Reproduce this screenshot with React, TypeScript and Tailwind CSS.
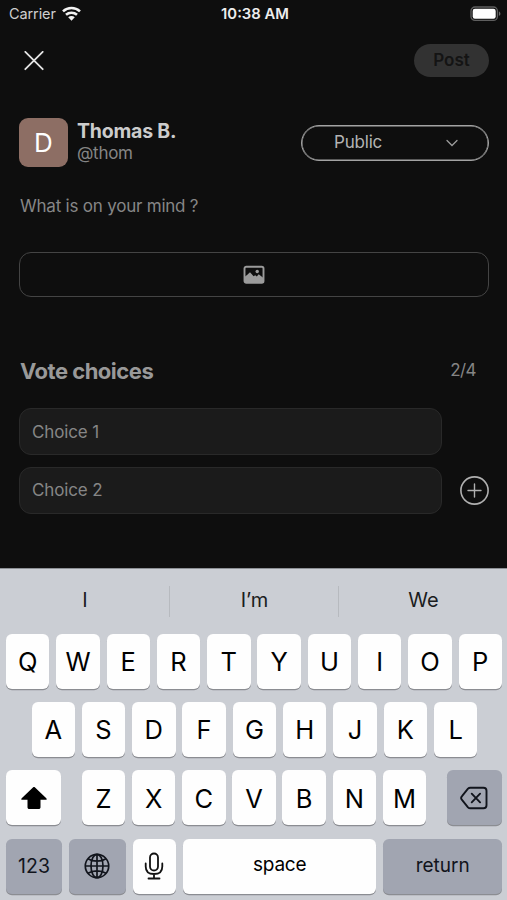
import { useState } from "react";
import type { ReactNode } from "react";
import clsx from "clsx";

const firstRow = ["Q", "W", "E", "R", "T", "Y", "U", "I", "O", "P"];
const secondRow = ["A", "S", "D", "F", "G", "H", "J", "K", "L"];
const thirdRow = ["Z", "X", "C", "V", "B", "N", "M"];
const suggestions = ["I", "I’m", "We"];

type KeyProps = {
  children: ReactNode;
  className?: string;
  dark?: boolean;
  label?: string;
};

function Key({ children, className, dark, label }: KeyProps) {
  return (
    <button
      type="button"
      aria-label={label}
      className={clsx(
        "flex h-[55px] shrink-0 items-center justify-center rounded-[6px] shadow-[0_1.3px_0_#8b8d92]",
        dark ? "bg-[#a1a5b1] text-[#11141c]" : "bg-[#fefefe] text-black",
        className
      )}
    >
      {children}
    </button>
  );
}

function LetterKey({ letter }: { letter: string }) {
  return (
    <Key className="w-[43.4px] pt-px text-[25.5px] leading-none">
      {letter}
    </Key>
  );
}

function StatusBar() {
  return (
    <div className="grid h-7 grid-cols-3 items-center pr-[6px] pl-[9px] text-[#ededed]">
      <div className="flex items-center gap-[6px]">
        <span className="text-[14.5px] leading-none tracking-[-0.1px] text-[#cfcfcf]">Carrier</span>
        <svg className="-mt-[2px]" width="19" height="15" viewBox="0 0 19 15" fill="none" stroke="#f2f2f2" strokeWidth="2.6">
          <path d="M1 5.4C5.8.9 13.2.9 18 5.400" />
          <path d="M4 8.800c3.100-2.800 7.900-2.800 11 0" />
          <path d="M6.200 11.200c1.900-1.700 4.700-1.700 6.600 0L9.500 14.700z" fill="#f2f2f2" stroke="none" />
        </svg>
      </div>
      <span className="text-center text-[14.8px] leading-none font-semibold whitespace-nowrap">10:38 AM</span>
      <svg className="justify-self-end" width="31" height="16" viewBox="0 0 31 16">
        <rect x="1" y="1" width="26.4" height="13.4" rx="4" fill="#0e0e0e" stroke="#5f5f5f" strokeWidth="1.3" />
        <rect x="2.700" y="2.700" width="23" height="10" rx="2.2" fill="#fff" />
        <path d="M28.9 5.500c2 .7 2 3.700 0 4.500z" fill="#6b6b6b" />
      </svg>
    </div>
  );
}

function Keyboard() {
  return (
    <div className="h-[332px] border-t border-[#8d9095] bg-[#cbced4] text-[#1a1c20]">
      <div className="grid h-[64.5px] grid-cols-3 items-center">
        {suggestions.map((word, i) => (
          <div
            key={word}
            className={clsx(
              "flex h-[31px] items-center justify-center pb-[2px] pl-px text-[20px] leading-none",
              i > 0 && "border-l border-[#b7babf]"
            )}
          >
            {word}
          </div>
        ))}
      </div>

      <div className="flex flex-col gap-[13.4px] pr-[5px] pl-[6px]">
        <div className="flex justify-between">
          {firstRow.map((l) => (
            <LetterKey key={l} letter={l} />
          ))}
        </div>
        <div className="flex justify-between pr-[24.5px] pl-[25.5px]">
          {secondRow.map((l) => (
            <LetterKey key={l} letter={l} />
          ))}
        </div>
        <div className="flex justify-between">
          <Key label="shift" className="w-[55px]">
            <svg width="28" height="24" viewBox="0 0 28 24">
              <path
                d="M13.200 1.300 1.700 12.300c-.9 1-.3 1.500.5 1.500h5.300v7.400c0 1.200.7 1.800 1.800 1.800h9.400c1.100 0 1.800-.6 1.800-1.800v-7.400h5.300c.8 0 1.400-.5.5-1.500L14.800 1.300c-.5-.5-1.100-.5-1.600 0z"
                fill="#000"
              />
            </svg>
          </Key>
          <div className="flex gap-[6.8px]">
            {thirdRow.map((l) => (
              <LetterKey key={l} letter={l} />
            ))}
          </div>
          <Key dark label="delete" className="w-[55px]">
            <svg width="28" height="24" viewBox="0 0 28 24" fill="none" stroke="#11141c" strokeWidth="1.9" strokeLinejoin="round" strokeLinecap="round">
              <path d="M10.300 1.700h13.200c2 0 3 1 3 3v14.600c0 2-1 3-3 3H10.300c-1 0-1.700-.3-2.300-.9l-6-7.500c-1.200-1.300-1.200-2.500 0-3.800l6-7.500c.6-.6 1.300-.9 2.300-.9z" />
              <path d="m11.700 7.700 8.400 8.600m0-8.600-8.400 8.600" />
            </svg>
          </Key>
        </div>
        <div className="flex justify-between">
          <Key dark className="w-[56px] text-[19.5px]">123</Key>
          <Key dark label="globe" className="w-[56.5px]">
            <svg width="26" height="26" viewBox="0 0 26 26" fill="none" stroke="#11141c" strokeWidth="1.7">
              <circle cx="13" cy="13" r="11.700" />
              <ellipse cx="13" cy="13" rx="6" ry="11.700" />
              <path d="M13 1.300v23.400M1.300 13h23.400M4 5.700c5 3.200 13 3.200 18 0M4 20.300c5-3.200 13-3.200 18 0" />
            </svg>
          </Key>
          <Key label="dictate" className="w-[43.4px]">
            <svg width="20" height="28" viewBox="0 0 20 28" fill="none" stroke="#111" strokeWidth="1.8" strokeLinecap="round">
              <rect x="6" y="1.500" width="8" height="17" rx="4" />
              <path d="M1.700 11.500v2.900c0 5 3.300 7.600 8.300 7.600s8.300-2.600 8.300-7.600v-2.900M10 22v4.500M4.500 26.500h11" />
            </svg>
          </Key>
          <Key className="w-[193.5px] pb-[2px] text-[19px] tracking-[-0.2px]">space</Key>
          <Key dark className="w-[118.5px] text-[19px]">return</Key>
        </div>
      </div>
    </div>
  );
}

export default function App() {
  const [choices, setChoices] = useState(["", ""]);

  const updateChoice = (index: number, value: string) => {
    setChoices(choices.map((c, i) => (i === index ? value : c)));
  };

  return (
    <div className="flex h-[900px] w-[507px] flex-col overflow-hidden bg-[#0e0e0e] font-['Inter','Liberation_Sans',sans-serif]">
      <StatusBar />

      <div className="flex h-[540px] flex-col pr-[18px] pl-[19px]">
        <div className="mt-4 flex h-[33px] items-center justify-between">
          <button type="button" aria-label="Close" className="ml-[5px]">
            <svg width="20" height="20" viewBox="0 0 20 20" stroke="#e4e4e4" strokeWidth="1.8" strokeLinecap="round">
              <path d="m1.300.8 17.400 17.400M18.700.8 1.300 18.200" />
            </svg>
          </button>
          <button type="button" className="h-[33px] w-[75px] rounded-full bg-[#323232] text-[17px] font-semibold text-[#141414]">
            Post
          </button>
        </div>

        <div className="mt-[41px] flex h-[49px] items-center">
          <div className="flex size-[49px] items-center justify-center rounded-[9px] bg-[#8d6e64] text-[26px] leading-none text-white">
            D
          </div>
          <div className="-mt-[3px] ml-[9px] flex flex-col">
            <span className="text-[19.5px] leading-[24px] font-bold tracking-[-0.2px] text-[#cccccc]">Thomas B.</span>
            <span className="text-[17px] leading-[21px] tracking-[-0.3px] text-[#858585]">@thom</span>
          </div>
          <button
            type="button"
            className="ml-auto flex h-9 w-[188px] items-center justify-between rounded-full border border-[#a3a3a3] pr-[30px] pl-[32px] text-[17px] tracking-[-0.2px] text-[#b3b3b3] shadow-[inset_0_0_0_0.5px_#a3a3a3]"
          >
            Public
            <svg width="12" height="8" viewBox="0 0 12 8" fill="none" stroke="#9c9c9c" strokeWidth="1.3" strokeLinecap="round">
              <path d="m1 1.500 5 5 5-5" />
            </svg>
          </button>
        </div>

        <p className="mt-[28px] h-[22px] pl-px text-[17px] leading-[22px] tracking-[-0.22px] text-[#868686]">What is on your mind ?</p>

        <button
          type="button"
          aria-label="Add image"
          className="mt-[35px] flex h-[45px] w-full shrink-0 items-center justify-center rounded-[12px] border border-[#444444]"
        >
          <svg width="22" height="20" viewBox="0 0 22 20">
            <rect x="1.500" y="1.700" width="19" height="16.200" rx="1.800" fill="#0e0e0e" stroke="#9b9b9b" strokeWidth="1.900" />
            <path d="M2 11.500 4 10l3-2.800 3.600 4 1.600-1 1.600 1.300 1.900-2.200 4.800 3.700v5H2z" fill="#9b9b9b" />
            <circle cx="14.200" cy="6.500" r="1.700" fill="#9b9b9b" />
          </svg>
        </button>

        <div className="mt-[60px] flex h-7 items-center justify-between pr-[13px] pl-px">
          <h2 className="text-[22px] leading-7 font-bold tracking-[-0.5px] text-[#999999]">Vote choices</h2>
          <span className="text-[17px] tracking-[-0.6px] text-[#858585]">{choices.length}/4</span>
        </div>

        <div className="mt-[23px] flex flex-col gap-[11.5px]">
          {choices.map((choice, i) => (
            <div key={i} className="flex items-center justify-between">
              <input
                value={choice}
                onChange={(e) => updateChoice(i, e.target.value)}
                placeholder={`Choice ${i + 1}`}
                className="h-[47px] w-[423px] rounded-[12px] border border-[#292929] bg-[#1b1b1b] px-3 text-[17px] tracking-[-0.15px] text-[#cccccc] outline-none placeholder:text-[#868686]"
              />
              {i === choices.length - 1 && (
                <button type="button" aria-label="Add choice" onClick={() => choices.length < 4 && setChoices([...choices, ""])}>
                  <svg width="29" height="29" viewBox="0 0 29 29" fill="none" stroke="#b0b0b0" strokeLinecap="round">
                    <circle cx="14.500" cy="14.500" r="13.600" strokeWidth="1.600" />
                    <path d="M14.500 8v13M8 14.500h13" strokeWidth="1.400" />
                  </svg>
                </button>
              )}
            </div>
          ))}
        </div>
      </div>

      <Keyboard />
    </div>
  );
}
